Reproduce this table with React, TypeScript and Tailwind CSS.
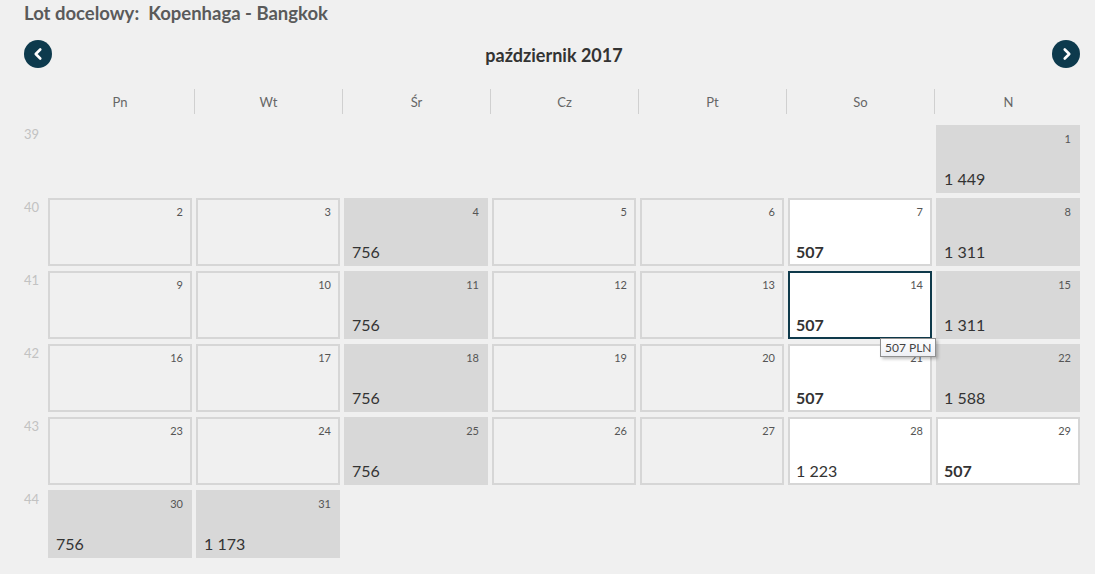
import { ChevronLeft, ChevronRight } from 'lucide-react';

type Kind = 'empty' | 'gray' | 'white' | 'none';

type Day = {
  day?: number;
  price?: string;
  kind: Kind;
  bold?: boolean;
  selected?: boolean;
  tip?: string;
};

const dayNames = ['Pn', 'Wt', 'Śr', 'Cz', 'Pt', 'So', 'N'];

const e = (day: number): Day => ({ day, kind: 'empty' });
const g = (day: number, price: string): Day => ({ day, price, kind: 'gray' });
const w = (day: number, price: string, bold = true): Day => ({ day, price, kind: 'white', bold });
const none: Day = { kind: 'none' };

// tygodnie 39–44, październik 2017
const weeks: { nr: number; days: Day[] }[] = [
  { nr: 39, days: [none, none, none, none, none, none, g(1, '1 449')] },
  { nr: 40, days: [e(2), e(3), g(4, '756'), e(5), e(6), w(7, '507'), g(8, '1 311')] },
  { nr: 41, days: [e(9), e(10), g(11, '756'), e(12), e(13), { ...w(14, '507'), selected: true, tip: '507 PLN' }, g(15, '1 311')] },
  { nr: 42, days: [e(16), e(17), g(18, '756'), e(19), e(20), w(21, '507'), g(22, '1 588')] },
  { nr: 43, days: [e(23), e(24), g(25, '756'), e(26), e(27), w(28, '1 223', false), w(29, '507')] },
  { nr: 44, days: [g(30, '756'), g(31, '1 173'), none, none, none, none, none] },
];

function Cell({ d }: { d: Day }) {
  if (d.kind === 'none') return <div className="h-[68px] mx-[2px]" />;
  const box =
    d.kind === 'gray'
      ? 'bg-[#d8d8d8] border-2 border-[#d8d8d8]'
      : d.kind === 'white'
        ? d.selected
          ? 'bg-white border-2 border-[#0f3a4b]'
          : 'bg-white border-2 border-[#d6d6d6]'
        : 'bg-[#f0f0f0] border-2 border-[#d6d6d6]';
  return (
    <div className={`relative h-[68px] mx-[2px] flex flex-col justify-between ${box}`}>
      <div className="text-right pr-[7px] pt-[4px] text-[11px] text-[#555] leading-4">{d.day}</div>
      <div
        className={`pl-[6px] pb-[2px] text-[16px] leading-5 text-[#333] ${d.bold ? 'font-bold' : ''}`}
      >
        {d.price}
      </div>
      {d.tip && (
        <div className="absolute z-10 left-[90px] top-[65px] px-[4px] h-[19px] flex items-center text-[12px] text-[#444] bg-gradient-to-b from-white to-[#eef0f5] border border-[#8f8f8f] shadow-[2px_2px_3px_rgba(0,0,0,0.25)] whitespace-nowrap">
          {d.tip}
        </div>
      )}
    </div>
  );
}

export default function App() {
  return (
    <div
      className="w-[1095px] h-[574px] bg-[#f0f0f0] overflow-hidden"
      style={{ fontFamily: 'Lato, "Noto Sans", sans-serif' }}
    >
      <div className="pl-6 pt-[1px] text-[18.5px] font-bold text-[#5a5a5a] leading-6">
        Lot docelowy:&nbsp; Kopenhaga - Bangkok
      </div>

      {/* nawigacja miesiąca */}
      <div className="flex items-center justify-between pl-6 pr-[15px] mt-[15px] h-7">
        <button className="w-7 h-7 rounded-full bg-[#0d3a4d] flex items-center justify-center text-white">
          <ChevronLeft size={18} strokeWidth={3.5} className="-ml-[1px]" />
        </button>
        <div className="text-[18px] font-bold text-[#333] pl-[4px] pt-[3px]">październik 2017</div>
        <button className="w-7 h-7 rounded-full bg-[#0d3a4d] flex items-center justify-center text-white">
          <ChevronRight size={18} strokeWidth={3.5} className="ml-[1px]" />
        </button>
      </div>

      {/* nagłówek dni */}
      <div className="flex pl-[46px] mt-[21px]">
        <div className="grid grid-cols-[repeat(7,148px)]">
          {dayNames.map((n, i) => (
            <div
              key={n}
              className={`h-[25px] flex items-center justify-center text-[13px] text-[#666] pt-[2px] ${i > 0 ? 'border-l border-[#d0d0d0]' : ''}`}
            >
              {n}
            </div>
          ))}
        </div>
      </div>

      <div className="flex flex-col gap-[5px] mt-[11px]">
        {weeks.map((wk) => (
          <div key={wk.nr} className="flex">
            <div className="w-[46px] pl-6 pt-[1px] text-[13px] text-[#c2c2c2] leading-4">{wk.nr}</div>
            <div className="grid grid-cols-[repeat(7,148px)]">
              {wk.days.map((d, i) => (
                <Cell key={i} d={d} />
              ))}
            </div>
          </div>
        ))}
      </div>
    </div>
  );
}
